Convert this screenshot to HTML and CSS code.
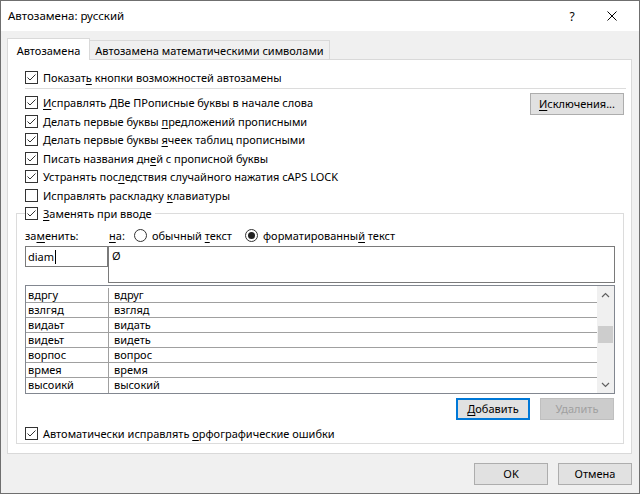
FILE: index.html
```html
<!DOCTYPE html>
<html lang="ru">
<head>
<meta charset="utf-8">
<title>Автозамена: русский</title>
<link rel="stylesheet" href="styles.css">
</head>
<body>
<div class="win">
  <div class="titlebar">
    <span class="title">Автозамена: русский</span>
    <span class="tb-btn tb-help">?</span>
    <span class="tb-btn tb-close"><svg width="10" height="10" viewBox="0 0 10 10"><path d="M0.5 0.5 L9.5 9.5 M9.5 0.5 L0.5 9.5" stroke="#000" stroke-width="1" fill="none"/></svg></span>
  </div>
  <div class="tabs">
    <div class="tab tab-active">Автозамена</div>
    <div class="tab tab-idle">Автозамена математическими символами</div>
  </div>
  <div class="panel">
    <div class="row h19">
      <span class="cb"><svg width="11" height="11" viewBox="0 0 11 11"><path d="M1.5 5.5 L4 8 L9.5 2.5" stroke="#333" fill="none"/></svg></span>
      <span>Показат<u>ь</u> кнопки возможностей автозамены</span>
    </div>
    <div class="sep"></div>
    <div class="row h19">
      <span class="cb"><svg width="11" height="11" viewBox="0 0 11 11"><path d="M1.5 5.5 L4 8 L9.5 2.5" stroke="#333" fill="none"/></svg></span>
      <span><u>И</u>справлять ДВе ПРописные буквы в начале слова</span>
      <button class="btn btn-exc"><u>И</u>сключения...</button>
    </div>
    <div class="row h18">
      <span class="cb"><svg width="11" height="11" viewBox="0 0 11 11"><path d="M1.5 5.5 L4 8 L9.5 2.5" stroke="#333" fill="none"/></svg></span>
      <span>Делать первые буквы <u>п</u>редложений прописными</span>
    </div>
    <div class="row h19">
      <span class="cb"><svg width="11" height="11" viewBox="0 0 11 11"><path d="M1.5 5.5 L4 8 L9.5 2.5" stroke="#333" fill="none"/></svg></span>
      <span>Делать первые буквы <u>я</u>чеек таблиц прописными</span>
    </div>
    <div class="row h18">
      <span class="cb"><svg width="11" height="11" viewBox="0 0 11 11"><path d="M1.5 5.5 L4 8 L9.5 2.5" stroke="#333" fill="none"/></svg></span>
      <span>Писать названия дн<u>е</u>й с прописной буквы</span>
    </div>
    <div class="row h19">
      <span class="cb"><svg width="11" height="11" viewBox="0 0 11 11"><path d="M1.5 5.5 L4 8 L9.5 2.5" stroke="#333" fill="none"/></svg></span>
      <span>Устранять пос<u>л</u>едствия случайного нажатия cAPS LOCK</span>
    </div>
    <div class="row h18">
      <span class="cb"></span>
      <span>Исправлять раскладку <u>к</u>лавиатуры</span>
    </div>
    <fieldset class="group">
      <legend class="legend">
        <span class="cb"><svg width="11" height="11" viewBox="0 0 11 11"><path d="M1.5 5.5 L4 8 L9.5 2.5" stroke="#333" fill="none"/></svg></span>
        <span><u>З</u>аменять при вводе</span>
      </legend>
      <div class="labels">
        <span class="lab-zam">за<u>м</u>енить:</span>
        <span class="lab-na"><u>н</u>а:</span>
        <span class="radio"></span>
        <span class="radio-text">обычный <u>т</u>екст</span>
        <span class="radio on"><span class="dot"></span></span>
        <span class="radio-text2">форматированны<u>й</u> текст</span>
      </div>
      <div class="inputs">
        <div class="field">diam<span class="caret"></span></div>
        <div class="repl">Ø</div>
      </div>
      <div class="list">
        <div class="rows">
          <div class="lrow"><span class="c1">вдргу</span><span class="c2">вдруг</span></div>
          <div class="lrow"><span class="c1">взлгяд</span><span class="c2">взгляд</span></div>
          <div class="lrow"><span class="c1">видаьт</span><span class="c2">видать</span></div>
          <div class="lrow"><span class="c1">видеьт</span><span class="c2">видеть</span></div>
          <div class="lrow"><span class="c1">ворпос</span><span class="c2">вопрос</span></div>
          <div class="lrow"><span class="c1">врмея</span><span class="c2">время</span></div>
          <div class="lrow last"><span class="c1">высоикй</span><span class="c2">высокий</span></div>
        </div>
        <div class="scroll">
          <div class="arrow"><svg width="9" height="6" viewBox="0 0 9 6"><path d="M1 5 L4.5 1.5 L8 5" stroke="#606060" stroke-width="1.2" fill="none"/></svg></div>
          <div class="thumb"></div>
          <div class="arrow arrow-down"><svg width="9" height="6" viewBox="0 0 9 6"><path d="M1 1 L4.5 4.5 L8 1" stroke="#606060" stroke-width="1.2" fill="none"/></svg></div>
        </div>
      </div>
      <div class="btnrow">
        <button class="btn btn-default"><u>Д</u>обавить</button>
        <button class="btn btn-disabled">Удалить</button>
      </div>
      <div class="row h19 row-auto">
        <span class="cb"><svg width="11" height="11" viewBox="0 0 11 11"><path d="M1.5 5.5 L4 8 L9.5 2.5" stroke="#333" fill="none"/></svg></span>
        <span>Автоматически исправлять <u>о</u>рфографические ошибки</span>
      </div>
    </fieldset>
  </div>
  <div class="footer">
    <button class="btn">OK</button>
    <button class="btn">Отмена</button>
  </div>
</div>
</body>
</html>
```
FILE: styles.css
```css
* { box-sizing: border-box; }
html, body { margin: 0; padding: 0; background: #fff; }
body {
  font-family: "Noto Sans", "Segoe UI", sans-serif;
  font-size: 11px;
  color: #000;
}
u { text-decoration-thickness: 1px; text-underline-offset: 2px; }

.win {
  width: 640px;
  height: 494px;
  border: 1px solid #6f6f6f;
  background: #f0f0f0;
  display: flex;
  flex-direction: column;
}

.titlebar {
  flex: none;
  height: 30px;
  background: #fff;
  display: flex;
  align-items: center;
  padding-left: 7px;
  padding-right: 7px;
}
.title { font-size: 11.5px; line-height: 16px; margin-right: auto; }
.tb-btn {
  width: 40px;
  height: 30px;
  display: flex;
  align-items: center;
  justify-content: center;
  font-size: 12px;
}

.tabs {
  flex: none;
  display: flex;
  align-items: flex-end;
  margin-top: 7px;
  margin-left: 6px;
  height: 21px;
}
.tab {
  border: 1px solid #d9d9d9;
  border-bottom: none;
  text-align: center;
  line-height: 16px;
  white-space: nowrap;
}
.tab-active {
  position: relative;
  z-index: 1;
  width: 83px;
  height: 22px;
  margin-bottom: -1px;
  padding-top: 4px;
  background: #fff;
}
.tab-idle {
  width: 241px;
  height: 19px;
  margin-left: -1px;
  padding-top: 2px;
  background: #f0f0f0;
}

.panel {
  flex: none;
  width: 625px;
  height: 395px;
  margin-left: 6px;
  border: 1px solid #d9d9d9;
  background: #fff;
  padding: 8px 7px 0 8px;
}

.row {
  display: flex;
  align-items: center;
  margin-left: 9px;
  white-space: nowrap;
}
.h19 { height: 19px; }
.h18 { height: 18px; }

.cb {
  flex: none;
  width: 13px;
  height: 13px;
  border: 1px solid #333;
  background: #fff;
  margin-right: 5px;
  display: flex;
}
.cb svg { display: block; }

.sep {
  height: 1px;
  background: #dcdcdc;
  margin: 1px -2px 4px 9px;
}

.btn {
  font-family: inherit;
  font-size: 11px;
  color: #000;
  background: #e1e1e1;
  border: 1px solid #adadad;
  width: 74px;
  height: 22px;
  padding: 0;
  margin: 0;
  line-height: 18px;
  text-align: center;
  border-radius: 0;
}
.btn-exc {
  width: 94px;
  margin-left: auto;
  align-self: flex-start;
}
.btn-default { border: 2px solid #0078d7; }
.btn-disabled {
  background: #cccccc;
  border-color: #bfbfbf;
  color: #a0a0a0;
}

.group {
  margin: 0;
  padding: 0 8px 0 8px;
  border: 1px solid #dcdcdc;
  width: 608px;
  min-width: 0;
}
.legend {
  display: flex;
  align-items: center;
  height: 19px;
  padding: 0 3px 0 0;
  margin: 0;
  white-space: nowrap;
}

.labels {
  display: flex;
  align-items: center;
  height: 16px;
  margin-top: 4px;
  white-space: nowrap;
}
.lab-zam { width: 84px; flex: none; }
.lab-na { width: 25px; flex: none; }
.radio {
  flex: none;
  width: 13px;
  height: 13px;
  border: 1px solid #333;
  border-radius: 50%;
  background: #fff;
  margin-right: 5px;
  display: flex;
  align-items: center;
  justify-content: center;
}
.radio .dot {
  width: 7px;
  height: 7px;
  border-radius: 50%;
  background: #222;
}
.radio-text { width: 93px; flex: none; }

.inputs {
  display: flex;
  align-items: flex-start;
  margin-top: 3px;
}
.field {
  width: 83px;
  height: 21px;
  border: 1px solid #7a7a7a;
  padding: 2px 2px;
  line-height: 15px;
  display: flex;
  align-items: center;
}
.caret {
  display: inline-block;
  width: 1px;
  height: 14px;
  background: #000;
  margin-left: 1px;
}
.repl {
  width: 507px;
  height: 37px;
  border: 1px solid #7a7a7a;
  padding: 1px 3px;
  line-height: 16px;
}

.list {
  display: flex;
  margin-top: 2px;
  height: 109px;
  border: 1px solid #828790;
}
.rows {
  flex: 1;
  padding-top: 2px;
}
.lrow {
  display: flex;
  height: 15px;
  border-bottom: 1px solid #a0a0a0;
  line-height: 14px;
}
.lrow.last { border-bottom: none; }
.c1 {
  width: 83px;
  flex: none;
  border-right: 1px solid #a0a0a0;
  padding-left: 2px;
}
.c2 { padding-left: 5px; }

.scroll {
  width: 17px;
  flex: none;
  background: #f0f0f0;
  display: flex;
  flex-direction: column;
  align-items: center;
}
.arrow {
  width: 17px;
  height: 17px;
  display: flex;
  align-items: center;
  justify-content: center;
}
.arrow svg { display: block; }
.arrow-down { margin-top: auto; }
.thumb {
  width: 15px;
  height: 17px;
  background: #cdcdcd;
  margin-top: 23px;
}

.btnrow {
  display: flex;
  justify-content: flex-end;
  gap: 10px;
  margin-top: 4px;
  padding-right: 1px;
}

.row-auto { margin-left: 0; margin-top: 4px; }

.footer {
  flex: none;
  display: flex;
  justify-content: flex-end;
  gap: 10px;
  margin-top: 9px;
  padding-right: 7px;
}
```
